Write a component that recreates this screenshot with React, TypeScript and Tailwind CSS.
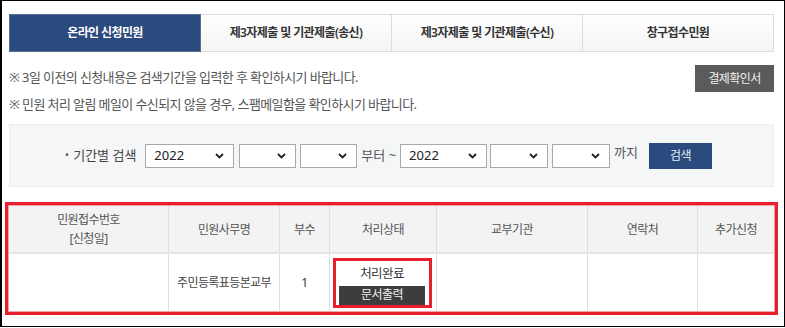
import React from "react";

const font = { fontFamily: '"Noto Sans", "Noto Sans CJK KR", sans-serif' };

function Chevron() {
  return (
    <svg width="9" height="6" viewBox="0 0 9 6" className="shrink-0">
      <polyline points="1,1 4.5,4.5 8,1" fill="none" stroke="#222" strokeWidth="1.8" />
    </svg>
  );
}

function Select({ w, value }: { w: string; value?: string }) {
  return (
    <div
      className={`${w} h-[24px] bg-white border border-[#a9a9a9] flex items-center justify-between pl-[8px] pr-[9px] text-[13px] text-[#222] tracking-normal`}
    >
      <span>{value ?? ""}</span>
      <Chevron />
    </div>
  );
}

export default function App() {
  const tabs = ["온라인 신청민원", "제3자제출 및 기관제출(송신)", "제3자제출 및 기관제출(수신)", "창구접수민원"];
  const cols = [
    { w: "w-[160px]", h: ["민원접수번호", "[신청일]"] },
    { w: "w-[111px]", h: ["민원사무명"] },
    { w: "w-[50px]", h: ["부수"] },
    { w: "w-[107px]", h: ["처리상태"] },
    { w: "w-[151px]", h: ["교부기관"] },
    { w: "w-[110px]", h: ["연락처"] },
    { w: "flex-1", h: ["추가신청"] },
  ];
  return (
    <div className="w-[785px] h-[328px] bg-white tracking-[-0.6px]" style={font}>
      <div className="w-[785px] h-[327px] border-l-2 border-t border-r border-b border-black pl-[7px] pr-[10px] pt-[13px]">
        {/* tabs */}
        <div className="flex h-[38px]">
          {tabs.map((t, i) =>
            i === 0 ? (
              <div
                key={t}
                className="w-[192px] h-full bg-[#2b4a7e] border border-[#5a6f90] flex items-center justify-center text-white text-[12px] font-semibold"
              >
                {t}
              </div>
            ) : (
              <div
                key={t}
                className="w-[191px] h-full bg-gradient-to-b from-white to-[#f4f4f4] border border-l-0 border-[#dcdcdc] flex items-center justify-center text-[#333] text-[12px] font-semibold"
              >
                {t}
              </div>
            )
          )}
        </div>
        {/* notes */}
        <div className="mt-[13px] h-[27px] flex items-center justify-between">
          <div className="text-[13px] text-[#555] pb-[2px]">※ 3일 이전의 신청내용은 검색기간을 입력한 후 확인하시기 바랍니다.</div>
          <div className="w-[79px] h-[27px] bg-[#5b5b5b] text-[#eee] text-[12px] flex items-center justify-center">
            결제확인서
          </div>
        </div>
        <div className="h-[24px] leading-[24px] text-[13px] text-[#555]">
          ※ 민원 처리 알림 메일이 수신되지 않을 경우, 스팸메일함을 확인하시기 바랍니다.
        </div>
        {/* search */}
        <div className="mt-[8px] h-[63px] bg-[#f5f6f8] border border-[#eceef1] flex items-center pl-[55px] text-[13px] text-[#444]">
          <span className="text-[10px] mr-[5px]">•</span>
          <span className="mr-[9px] tracking-normal">기간별 검색</span>
          <Select w="w-[89px]" value="2022" />
          <div className="w-[5px]" />
          <Select w="w-[57px]" />
          <div className="w-[4px]" />
          <Select w="w-[57px]" />
          <span className="mx-[4px] text-[#555] tracking-normal">부터 ~</span>
          <Select w="w-[87px]" value="2022" />
          <div className="w-[3px]" />
          <Select w="w-[58px]" />
          <div className="w-[4px]" />
          <Select w="w-[58px]" />
          <span className="ml-[4px] mr-[11px] text-[#555] pb-[6px] tracking-normal">까지</span>
          <div className="w-[63px] h-[26px] bg-[#2b4b7e] text-[#e6ebf3] text-[12px] flex items-center justify-center">
            검색
          </div>
        </div>
        {/* table */}
        <div className="mt-[15px] ml-[-4px] mr-[-4px] border-[3px] border-[#e8202d]">
          <div className="border border-[#f2a3a8]">
            <div className="flex h-[48px] bg-[#f3f3f3] border-b-2 border-[#e6e6e6] text-[12px] text-[#555]">
              {cols.map((c, i) => (
                <div
                  key={i}
                  className={`${c.w} flex flex-col items-center justify-center leading-[19px] ${i < 6 ? "border-r border-[#dedede]" : ""}`}
                >
                  {c.h.map((l) => (
                    <span key={l}>{l}</span>
                  ))}
                </div>
              ))}
            </div>
            <div className="flex h-[57px] text-[13px] text-[#444]">
              {cols.map((c, i) => (
                <div
                  key={i}
                  className={`${c.w} flex items-center justify-center ${i < 6 ? "border-r border-[#dedede]" : ""}`}
                >
                  {i === 1 && <span className="text-[12px]">주민등록표등본교부</span>}
                  {i === 2 && <span>1</span>}
                  {i === 3 && (
                    <div className="w-[99px] h-[50px] border-[3px] border-[#e8202d] flex flex-col items-center ml-[-2px]">
                      <span className="text-[12.5px] leading-[15px] mt-[5px] text-[#333]">처리완료</span>
                      <div className="mt-[5px] w-[86px] h-[22px] bg-[#3d3d3d] text-[#f0f0f0] text-[12px] flex items-center justify-center">
                        문서출력
                      </div>
                    </div>
                  )}
                </div>
              ))}
            </div>
          </div>
        </div>
      </div>
    </div>
  );
}
